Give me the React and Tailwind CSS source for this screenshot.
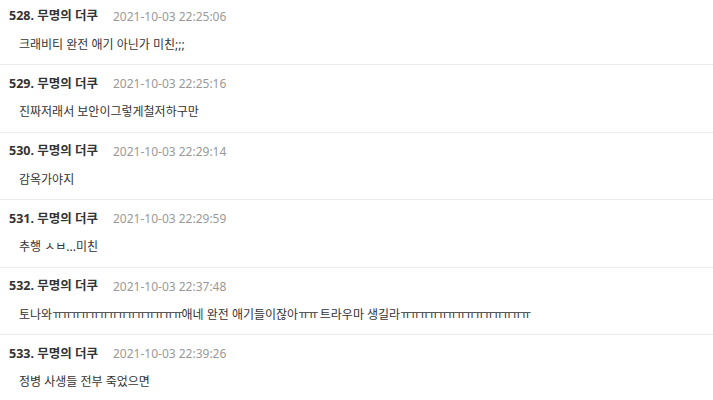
const comments = [
    { no: 528, date: '2021-10-03 22:25:06', text: '크래비티 완전 애기 아닌가 미친;;;' },
    { no: 529, date: '2021-10-03 22:25:16', text: '진짜저래서 보안이그렇게철저하구만' },
    { no: 530, date: '2021-10-03 22:29:14', text: '감옥가야지' },
    { no: 531, date: '2021-10-03 22:29:59', text: '추행 ㅅㅂ...미친' },
    { no: 532, date: '2021-10-03 22:37:48', text: '토나와ㅠㅠㅠㅠㅠㅠㅠㅠㅠㅠㅠㅠㅠㅠ애네 완전 애기들이잖아ㅠㅠ 트라우마 생길라ㅠㅠㅠㅠㅠㅠㅠㅠㅠㅠㅠㅠㅠㅠ' },
    { no: 533, date: '2021-10-03 22:39:26', text: '정병 사생들 전부 죽었으면' },
];

// ㅠ runs are drawn narrower in the original font
function renderText(text) {
    return text.split(/(ㅠ+)/).map((part, i) =>
        part.startsWith('ㅠ')
            ? <span key={i} className="tracking-[-1.8px]">{part}</span>
            : <span key={i}>{part}</span>
    );
}

function CommentRow({ item }) {
    return (
        <div className="border-b border-[#ebebeb] pt-[10px] pb-[10.5px]">
            <div className="flex items-center h-[18px] pl-[9px]">
                <span className="text-[12.5px] font-bold text-[#333]">{item.no}. 무명의 더쿠</span>
                <span className="ml-[15px] text-[12px] text-[#999]">{item.date}</span>
            </div>
            <p className="mt-[10px] h-[18px] leading-[18px] pl-[19px] text-[12px] text-[#333] whitespace-nowrap">
                {renderText(item.text)}
            </p>
        </div>
    );
}

export default function App() {
    return (
        <div
            className="w-[713px] h-[400px] overflow-hidden bg-white"
            style={{ fontFamily: '"Noto Sans", "Noto Sans CJK KR", sans-serif' }}
        >
            <div className="-mt-[2.5px]">
                {comments.map(c => (
                    <CommentRow key={c.no} item={c} />
                ))}
            </div>
        </div>
    );
}
